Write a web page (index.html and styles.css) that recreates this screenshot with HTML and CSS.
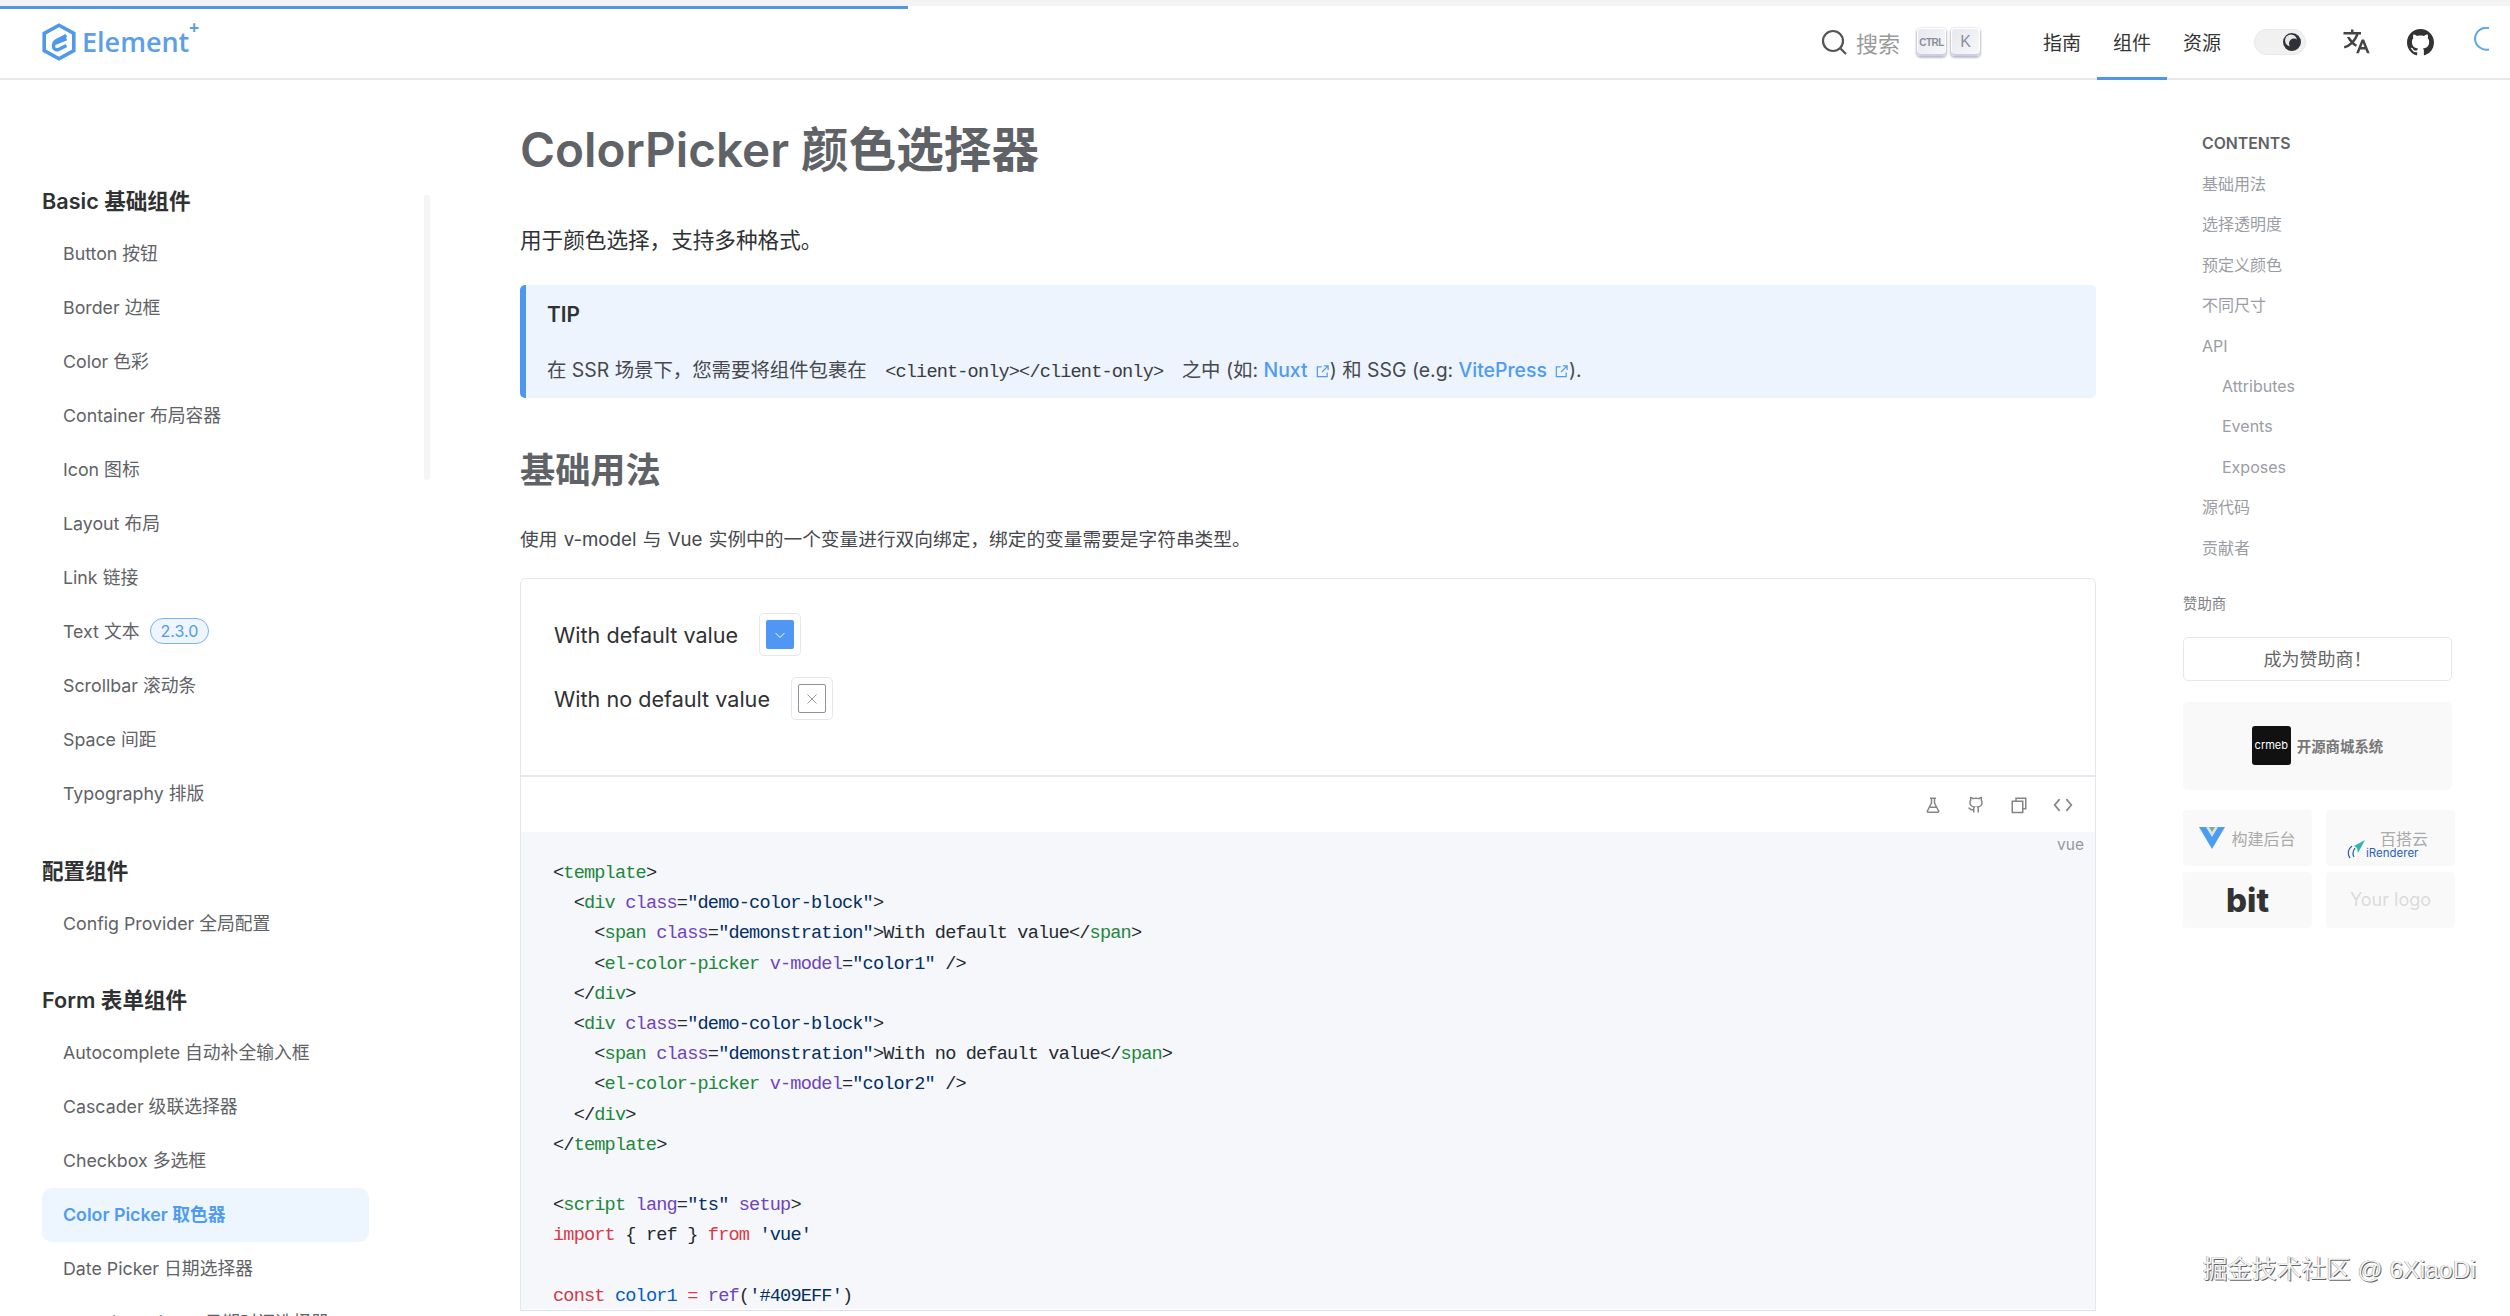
FILE: index.html
```html
<!DOCTYPE html>
<html lang="zh-CN">
<head>
<meta charset="utf-8">
<title>ColorPicker 颜色选择器</title>
<link rel="stylesheet" href="styles.css">
</head>
<body>
<div class="page">
  <header class="topbar">
    <div class="progress"></div>
    <a class="brand">
      <svg class="brand-mark" viewBox="0 0 34 38" width="34" height="38"><path d="M17 2.200 31.800 10.400V27.600L17 35.800 2.200 27.600V10.400Z" fill="none" stroke="#4f98ec" stroke-width="3.600" stroke-linejoin="miter"/><path d="M24.500 12.500 14.500 17.500c-2.600 1.300-3 3-3 5.500 0 3.500 2.600 4.400 5 3.400l8-4M13 20.500l11.500-4.800" fill="none" stroke="#4f98ec" stroke-width="3.400"/></svg>
      <span class="brand-name">Element<sup class="brand-plus">+</sup></span>
    </a>
    <div class="top-right">
      <div class="search">
        <svg class="search-icon" viewBox="0 0 26 26" width="26" height="26"><circle cx="12" cy="12" r="10" fill="none" stroke="#555" stroke-width="2.200"/><path d="M19.500 19.500 25 25" stroke="#555" stroke-width="2.200"/></svg>
        <span class="search-text">搜索</span>
        <kbd class="key key-ctrl">CTRL</kbd>
        <kbd class="key">K</kbd>
      </div>
      <nav class="nav">
        <a class="nav-link">指南</a>
        <a class="nav-link nav-active">组件</a>
        <a class="nav-link">资源</a>
      </nav>
      <div class="switch">
        <svg class="switch-icon" viewBox="0 0 20 20" width="20" height="20"><circle cx="10" cy="10" r="9" fill="#2f3136"/><circle cx="9" cy="8.500" r="6" fill="#e8e8e8"/><circle cx="12" cy="11.500" r="5" fill="#2f3136"/></svg>
      </div>
      <svg class="t-icon" viewBox="0 0 24 24" width="30" height="30"><path fill="#444" d="m18.500 10l4.400 11h-2.155l-1.201-3h-4.090l-1.199 3h-2.154L16.500 10h2zM10 2v2h6v2h-1.968a18.222 18.222 0 0 1-3.620 6.301a14.864 14.864 0 0 0 2.336 1.707l-.751 1.878A17.015 17.015 0 0 1 9 13.725a16.676 16.676 0 0 1-6.201 3.548l-.536-1.929a14.700 14.700 0 0 0 5.327-3.042A18.078 18.078 0 0 1 4.767 8h2.240A16.032 16.032 0 0 0 9 10.877a16.165 16.165 0 0 0 2.910-4.876L2 6V4h6V2h2zm7.500 10.885L16.253 16h2.492L17.500 12.885z"/></svg>
      <svg class="gh-icon" viewBox="0 0 16 16" width="27" height="27"><path fill="#333" d="M8 0C3.580 0 0 3.580 0 8c0 3.540 2.290 6.530 5.470 7.590.4.07.55-.17.55-.38 0-.19-.01-.82-.01-1.490-2.010.37-2.530-.49-2.690-.94-.09-.23-.48-.94-.82-1.130-.28-.15-.68-.52-.01-.53.63-.01 1.080.58 1.230.82.72 1.210 1.870.87 2.330.66.07-.52.28-.87.51-1.070-1.780-.2-3.640-.89-3.640-3.950 0-.87.31-1.590.82-2.150-.08-.2-.36-1.020.08-2.120 0 0 .67-.21 2.200.82.64-.18 1.320-.27 2-.27.68 0 1.360.09 2 .27 1.530-1.040 2.200-.82 2.200-.82.44 1.100.16 1.920.08 2.120.51.56.82 1.270.82 2.150 0 3.070-1.870 3.750-3.650 3.950.29.25.54.73.54 1.480 0 1.070-.01 1.930-.01 2.200 0 .21.15.46.55.38A8.013 8.013 0 0016 8c0-4.420-3.580-8-8-8z"/></svg>
      <svg class="spin-icon" viewBox="0 0 17 24" width="17" height="24"><path d="M16 1A11.500 11.500 0 0 0 2 11.500 11.500 11.500 0 0 0 16 22.500" fill="none" stroke="#5da8e4" stroke-width="2"/></svg>
    </div>
  </header>

  <div class="layout">
    <aside class="sidebar">
      <div class="side-scroll"></div>
      <section class="side-group">
        <h3 class="side-title">Basic 基础组件</h3>
        <a class="side-item">Button 按钮</a>
        <a class="side-item">Border 边框</a>
        <a class="side-item">Color 色彩</a>
        <a class="side-item">Container 布局容器</a>
        <a class="side-item">Icon 图标</a>
        <a class="side-item">Layout 布局</a>
        <a class="side-item">Link 链接</a>
        <a class="side-item">Text 文本 <span class="badge">2.3.0</span></a>
        <a class="side-item">Scrollbar 滚动条</a>
        <a class="side-item">Space 间距</a>
        <a class="side-item">Typography 排版</a>
      </section>
      <section class="side-group">
        <h3 class="side-title">配置组件</h3>
        <a class="side-item">Config Provider 全局配置</a>
      </section>
      <section class="side-group">
        <h3 class="side-title">Form 表单组件</h3>
        <a class="side-item">Autocomplete 自动补全输入框</a>
        <a class="side-item">Cascader 级联选择器</a>
        <a class="side-item">Checkbox 多选框</a>
        <a class="side-item side-active">Color Picker 取色器</a>
        <a class="side-item">Date Picker 日期选择器</a>
        <a class="side-item">DateTime Picker 日期时间选择器</a>
      </section>
    </aside>

    <main class="main">
      <h1 class="h1">ColorPicker <b>颜色选择器</b></h1>
      <p class="lead">用于颜色选择，支持多种格式。</p>
      <div class="tip">
        <p class="tip-title">TIP</p>
        <p class="tip-body">在 SSR 场景下，您需要将组件包裹在 <code class="inline-code">&lt;client-only&gt;&lt;/client-only&gt;</code> 之中 (如: <a class="link">Nuxt <svg class="ext" viewBox="0 0 16 16" width="15" height="15"><path d="M7 3H2.500v10.500H13V9M9.500 2H14v4.500M14 2 7.500 8.500" fill="none" stroke="currentColor" stroke-width="1.300"/></svg></a>) 和 SSG (e.g: <a class="link">VitePress <svg class="ext" viewBox="0 0 16 16" width="15" height="15"><path d="M7 3H2.500v10.500H13V9M9.500 2H14v4.500M14 2 7.500 8.500" fill="none" stroke="currentColor" stroke-width="1.300"/></svg></a>).</p>
      </div>
      <h2 class="h2">基础用法</h2>
      <p class="desc">使用 v-model 与 Vue 实例中的一个变量进行双向绑定，绑定的变量需要是字符串类型。</p>

      <div class="demo">
        <div class="preview">
          <div class="demo-row">
            <span class="demo-label">With default value</span>
            <span class="picker"><span class="picker-color"><svg viewBox="0 0 12 12" width="12" height="12"><path d="M1.500 4 6 8.500 10.500 4" fill="none" stroke="#fff" stroke-width="1"/></svg></span></span>
          </div>
          <div class="demo-row">
            <span class="demo-label">With no default value</span>
            <span class="picker"><span class="picker-empty"><svg viewBox="0 0 12 12" width="12" height="12"><path d="M1.500 1.500 10.500 10.500M10.500 1.500 1.500 10.500" fill="none" stroke="#999" stroke-width="1"/></svg></span></span>
          </div>
        </div>
        <div class="toolbar">
          <svg class="tool" viewBox="0 0 24 24" width="18" height="18"><path d="M8 3h8M10 3v6.500L4.500 20a1 1 0 0 0 1 1.500h13a1 1 0 0 0 1-1.500L14 9.500V3M7.500 15h9" fill="none" stroke="#858585" stroke-width="2"/></svg>
          <svg class="tool" viewBox="0 0 24 24" width="18" height="18"><path d="M15 22v-4a4.800 4.800 0 0 0-1-3.500c3 0 6-2 6-5.500.08-1.250-.27-2.480-1-3.500.28-1.150.28-2.350 0-3.500 0 0-1 0-3 1.500-2.640-.5-5.360-.5-8 0C6 2 5 2 5 2c-.3 1.150-.3 2.350 0 3.500A5.403 5.403 0 0 0 4 9c0 3.500 3 5.500 6 5.500-.39.49-.68 1.050-.85 1.650-.17.6-.22 1.230-.15 1.850v4M9 18c-4.510 2-5-2-7-2" fill="none" stroke="#858585" stroke-width="2"/></svg>
          <svg class="tool" viewBox="0 0 24 24" width="18" height="18"><path d="M8 7V3h13v14h-4M3 7h14v15H3Z" fill="none" stroke="#858585" stroke-width="2"/></svg>
          <svg class="tool" viewBox="0 0 24 24" width="20" height="20"><path d="M8 5 2 12l6 7M16 5l6 7-6 7" fill="none" stroke="#858585" stroke-width="2"/></svg>
        </div>
        <div class="code">
          <span class="lang">vue</span>
<pre class="pre"><span class="p">&lt;</span><span class="t">template</span><span class="p">&gt;</span>
  <span class="p">&lt;</span><span class="t">div</span> <span class="a">class</span><span class="p">=</span><span class="s">"demo-color-block"</span><span class="p">&gt;</span>
    <span class="p">&lt;</span><span class="t">span</span> <span class="a">class</span><span class="p">=</span><span class="s">"demonstration"</span><span class="p">&gt;With default value&lt;/</span><span class="t">span</span><span class="p">&gt;</span>
    <span class="p">&lt;</span><span class="t">el-color-picker</span> <span class="a">v-model</span><span class="p">=</span><span class="s">"color1"</span> <span class="p">/&gt;</span>
  <span class="p">&lt;/</span><span class="t">div</span><span class="p">&gt;</span>
  <span class="p">&lt;</span><span class="t">div</span> <span class="a">class</span><span class="p">=</span><span class="s">"demo-color-block"</span><span class="p">&gt;</span>
    <span class="p">&lt;</span><span class="t">span</span> <span class="a">class</span><span class="p">=</span><span class="s">"demonstration"</span><span class="p">&gt;With no default value&lt;/</span><span class="t">span</span><span class="p">&gt;</span>
    <span class="p">&lt;</span><span class="t">el-color-picker</span> <span class="a">v-model</span><span class="p">=</span><span class="s">"color2"</span> <span class="p">/&gt;</span>
  <span class="p">&lt;/</span><span class="t">div</span><span class="p">&gt;</span>
<span class="p">&lt;/</span><span class="t">template</span><span class="p">&gt;</span>

<span class="p">&lt;</span><span class="t">script</span> <span class="a">lang</span><span class="p">=</span><span class="s">"ts"</span> <span class="a">setup</span><span class="p">&gt;</span>
<span class="k">import</span> <span class="p">{ ref }</span> <span class="k">from</span> <span class="s">'vue'</span>

<span class="k">const</span> <span class="v">color1</span> <span class="k">=</span> <span class="a">ref</span><span class="p">(</span><span class="s">'#409EFF'</span><span class="p">)</span></pre>
        </div>
      </div>
    </main>

    <aside class="right">
      <nav class="toc">
        <p class="toc-head">CONTENTS</p>
        <a class="toc-item">基础用法</a>
        <a class="toc-item">选择透明度</a>
        <a class="toc-item">预定义颜色</a>
        <a class="toc-item">不同尺寸</a>
        <a class="toc-item">API</a>
        <a class="toc-item toc-sub">Attributes</a>
        <a class="toc-item toc-sub">Events</a>
        <a class="toc-item toc-sub">Exposes</a>
        <a class="toc-item">源代码</a>
        <a class="toc-item">贡献者</a>
      </nav>
      <p class="sp-head">赞助商</p>
      <a class="sp-btn">成为赞助商！</a>
      <div class="sp-wide">
        <span class="crmeb">crmeb</span>
        <span class="crmeb-text">开源商城系统</span>
      </div>
      <div class="sp-grid">
        <div class="sp-cell">
          <svg viewBox="0 0 26 22" width="26" height="22"><path d="M0 0h26L13 22Z" fill="#4c9cf0"/><path d="M7 0h12l-6 10Z" fill="#d7e4ef"/><path d="M10 0h6l-3 5Z" fill="#7bb27f"/></svg>
          <span class="cell-text">构建后台</span>
        </div>
        <div class="sp-cell sp-render">
          <span class="cell-text render-top">百搭云</span>
          <span class="render-bottom"><svg viewBox="0 0 20 20" width="20" height="20"><path d="M19 1 8 7l3 2 1 5Z" fill="#2fb6b0"/><path d="M6 7c-4 3-5 8-2 12M9 9c-2 3-3 6-1 9" fill="none" stroke="#2a62b8" stroke-width="1.300"/></svg>iRenderer</span>
        </div>
        <div class="sp-cell"><span class="bit">bit</span></div>
        <div class="sp-cell"><span class="your">Your logo</span></div>
      </div>
    </aside>
  </div>
  <div class="watermark">掘金技术社区 @ 6XiaoDi</div>
</div>
</body>
</html>
```

FILE: styles.css
```css
* { box-sizing: border-box; }
html, body { margin: 0; padding: 0; background: #fff; }
body {
  font-family: Inter, "Noto Sans CJK SC", sans-serif;
  color: #303133;
}
.page {
  position: relative;
  height: 1316px;
  overflow: hidden;
}
p, h1, h2, h3 { margin: 0; }

/* top bar */
.topbar {
  position: relative;
  height: 80px;
  border-top: 6px solid #f3f4f6;
  border-bottom: 2px solid #e6e8eb;
  display: flex;
  align-items: center;
  justify-content: space-between;
  padding: 0 20px 0 42px;
}
.progress {
  position: absolute;
  top: 0;
  left: 0;
  width: 908px;
  height: 3px;
  background: #4f96e8;
}
.brand { display: flex; align-items: center; gap: 6px; }
.brand-name {
  font-size: 27px;
  font-weight: 600;
  color: #5b9eea;
  font-family: "Open Sans", sans-serif;
  line-height: 38px;
  position: relative;
}
.brand-plus {
  position: absolute;
  top: -11px;
  right: -10px;
  font-size: 18px;
  font-weight: 700;
  line-height: 30px;
}
.top-right { display: flex; align-items: center; height: 100%; }
.search { display: flex; align-items: center; margin-right: 42px; }
.search-icon { margin-right: 9px; }
.search-text { font-size: 22px; color: #9a9a9a; margin-right: 17px; }
.key {
  width: 29px;
  height: 28px;
  margin-right: 5px;
  border-radius: 4px;
  background: linear-gradient(-225deg, #e6e7ee, #f9f9f9);
  box-shadow: inset 0 -2px 0 0 #cdcde6, inset 0 0 1px 1px #fff, 0 1px 2px 1px rgba(30, 35, 90, .3);
  display: flex;
  align-items: center;
  justify-content: center;
  font-family: "Liberation Sans", sans-serif;
  font-size: 16px;
  color: #8a8f9c;
}
.key-ctrl { font-size: 10px; font-weight: 700; letter-spacing: -0.5px; }
.nav { display: flex; height: 100%; align-items: stretch; }
.nav-link {
  width: 70px;
  display: flex;
  align-items: center;
  justify-content: center;
  font-size: 19px;
  color: #333;
  margin-bottom: -2px;
  border-bottom: 3px solid transparent;
}
.nav-active { border-bottom-color: #4f96e8; }
.switch {
  width: 52px;
  height: 26px;
  margin-left: 17px;
  border-radius: 13px;
  background: #f1f1f2;
  border: 1px solid #e8e8e8;
  display: flex;
  align-items: center;
  justify-content: flex-end;
  padding-right: 3px;
}
.t-icon { margin-left: 35px; }
.gh-icon { margin-left: 36px; }
.spin-icon { margin: -6px 0 0 39px; }

/* layout */
.layout {
  display: grid;
  grid-template-columns: 520px 1576px 414px;
}

/* sidebar */
.sidebar {
  position: relative;
  padding: 95px 151px 0 42px;
}
.side-scroll {
  position: absolute;
  left: 424px;
  top: 115px;
  width: 6px;
  height: 285px;
  border-radius: 3px;
  background: #f5f5f6;
}
.side-group { margin-bottom: 23.6px; }
.side-title {
  height: 52px;
  line-height: 52px;
  font-size: 21.6px;
  font-weight: 600;
  color: #303133;
}
.side-item {
  display: block;
  height: 54px;
  line-height: 54px;
  padding-left: 21px;
  font-size: 17.8px;
  color: #606266;
  white-space: nowrap;
}
.side-active {
  background: #edf5fe;
  border-radius: 10px;
  color: #4f9bf0;
  font-weight: 600;
}
.badge {
  display: inline-block;
  margin-left: 5px;
  padding: 0 10px;
  height: 26px;
  line-height: 24px;
  font-size: 16px;
  border-radius: 13px;
  border: 1px solid #79b4ef;
  background: #eef5fe;
  color: #4f9bf0;
  vertical-align: 1px;
}

/* main */
.main { padding-top: 40px; }
.h1 {
  font-size: 47.6px;
  line-height: 60px;
  font-weight: 600;
  color: #5f6266;
}
.h1 b { font-weight: 700; }
.lead {
  margin-top: 44px;
  font-size: 21.6px;
  line-height: 32px;
  color: #303133;
}
.tip {
  margin-top: 29px;
  height: 113px;
  padding: 13px 27px 0 21px;
  background: #edf4fe;
  border-left: 6px solid #4f96ee;
  border-radius: 5px;
}
.tip-title {
  font-size: 20.8px;
  line-height: 34px;
  font-weight: 600;
  color: #303133;
}
.tip-body {
  margin-top: 23px;
  font-size: 19.4px;
  line-height: 30px;
  color: #46484d;
}
.inline-code {
  font-family: "Liberation Mono", monospace;
  font-size: 18.6px;
  letter-spacing: -0.86px;
  padding: 0 13px;
  color: #3a3c40;
}
.link { color: #4f9bf0; font-weight: 500; }
.ext { vertical-align: -2px; margin-left: 2px; }
.h2 {
  margin-top: 47px;
  font-size: 35.2px;
  line-height: 50px;
  font-weight: 700;
  color: #5f6266;
}
.desc {
  margin-top: 30px;
  font-size: 18.7px;
  word-spacing: 1px;
  line-height: 30px;
  color: #46484d;
}

/* demo */
.demo {
  margin-top: 23px;
  height: 733px;
  border: 1px solid #e4e7ed;
  border-radius: 6px 6px 0 0;
  border-bottom-color: #dcdfe4;
}
.preview {
  height: 198px;
  padding: 34px 33px 0;
  display: flex;
  flex-direction: column;
  gap: 21px;
  border-bottom: 2px solid #e6e8eb;
}
.demo-row { display: flex; align-items: center; gap: 21px; height: 43px; }
.demo-label { font-size: 21.6px; color: #303133; }
.picker {
  width: 42px;
  height: 43px;
  padding: 6px;
  border: 1px solid #e4e7ed;
  border-radius: 5px;
  display: block;
}
.picker-color, .picker-empty {
  width: 100%;
  height: 100%;
  display: flex;
  align-items: center;
  justify-content: center;
  border-radius: 2px;
}
.picker-color { background: #4f96f5; }
.picker-empty { border: 1px solid #909399; }
.toolbar {
  height: 55px;
  display: flex;
  align-items: center;
  justify-content: flex-end;
  gap: 25px;
  padding: 0 22px 0 0;
}
.code {
  position: relative;
  height: 477px;
  background: #f5f7fb;
  padding: 27px 32px 0;
  overflow: hidden;
}
.lang {
  position: absolute;
  right: 11px;
  top: 3px;
  font-size: 15.5px;
  color: #97999e;
}
.pre {
  margin: 0;
  font-family: "Liberation Mono", monospace;
  font-size: 18.6px;
  letter-spacing: -0.84px;
  line-height: 30.2px;
  color: #24292e;
}
.p { color: #24292e; }
.t { color: #22863a; }
.a { color: #6f42c1; }
.s { color: #032f62; }
.k { color: #d73a49; }
.v { color: #005cc5; }

/* right */
.right { padding: 44px 0 0 87px; }
.toc { padding-left: 19px; }
.toc-head {
  font-size: 15.8px;
  line-height: 40px;
  font-weight: 600;
  color: #5f6266;
}
.toc-item {
  display: block;
  height: 40.4px;
  line-height: 40.4px;
  font-size: 16px;
  color: #9a9da3;
}
.toc-sub { padding-left: 20px; }
.sp-head {
  margin-top: 21px;
  font-size: 14.4px;
  line-height: 30px;
  color: #808285;
}
.sp-btn {
  margin-top: 18px;
  width: 269px;
  height: 44px;
  padding-bottom: 2px;
  display: flex;
  align-items: center;
  justify-content: center;
  border: 1px solid #e4e7ed;
  border-radius: 5px;
  font-size: 18px;
  color: #666;
}
.sp-wide {
  margin-top: 21px;
  width: 269px;
  height: 88px;
  background: #f9f9fa;
  border-radius: 5px;
  display: flex;
  align-items: center;
  justify-content: center;
  gap: 6px;
}
.crmeb {
  width: 39px;
  height: 39px;
  background: #111;
  border-radius: 3px;
  color: #fff;
  font-size: 11px;
  line-height: 39px;
  text-align: center;
}
.crmeb-text { font-size: 14.4px; font-weight: 600; color: #777; }
.sp-grid {
  margin-top: 20px;
  width: 272px;
  display: grid;
  grid-template-columns: 129px 129px;
  grid-auto-rows: 56px;
  column-gap: 14px;
  row-gap: 6px;
}
.sp-cell {
  background: #f9f9fa;
  border-radius: 4px;
  display: flex;
  align-items: center;
  justify-content: center;
  gap: 6px;
}
.cell-text { font-size: 16px; color: #aaa; }
.sp-render {
  flex-direction: column;
  justify-content: flex-start;
  gap: 0;
  align-items: flex-end;
  padding: 21px 27px 0 0;
}
.render-top { line-height: 16px; }
.render-bottom {
  display: flex;
  align-items: flex-end;
  align-self: flex-start;
  margin-left: 20px;
  margin-top: -8px;
  font-size: 11.5px;
  line-height: 12px;
  color: #2a62b8;
}
.bit { font-size: 33px; font-weight: 800; color: #333; }
.your { font-size: 18px; color: #dcdcdc; }

.watermark {
  position: absolute;
  right: 34px;
  top: 1252px;
  font-size: 24.7px;
  line-height: 36px;
  color: #f4f4f4;
  font-family: "Liberation Sans", "Noto Sans CJK SC", sans-serif;
  text-shadow: 1px 1px 0 #666, -0.5px 0 0 #999;
}
```
